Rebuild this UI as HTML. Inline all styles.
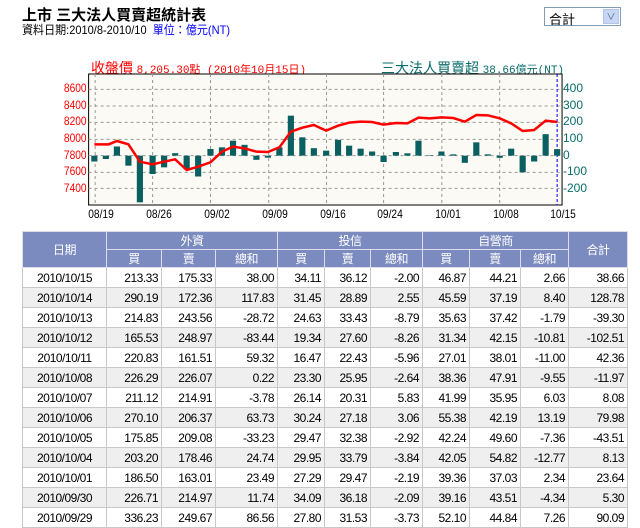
<!DOCTYPE html>
<html><head><meta charset="utf-8">
<style>
*{margin:0;padding:0;box-sizing:border-box}
body{width:640px;height:528px;overflow:hidden;background:#fff;font-family:"Liberation Sans","Noto Sans CJK TC",sans-serif;position:relative}
.abs{position:absolute;white-space:nowrap}
.yl{position:absolute;font-size:12px;color:#f00;left:60px;width:26px;text-align:right;transform:scaleX(.85);transform-origin:right}
.yr{position:absolute;font-size:12px;color:#0a6b6b;left:563px}
.xl{position:absolute;font-size:12px;color:#000;top:207px;transform:scaleX(.85)}
table{position:absolute;left:22px;top:231px;border-collapse:collapse;font-size:12px;table-layout:fixed}
td,th{border:1px solid #c8c8c8;height:20px;padding:0 3px;text-align:right;font-weight:normal;letter-spacing:-0.5px}
th{background:#7b8bbf;color:#fff;text-align:center;border-color:#dde;height:18px}
td:first-child{text-align:center}
tr.g td{background:#efefef}
</style></head><body>
<div class="abs" style="left:22px;top:4px;font-size:15px;font-weight:bold;color:#000">上市 三大法人買賣超統計表</div>
<div class="abs" style="left:22px;top:21px;font-size:12px;color:#000;transform:scaleX(.92);transform-origin:left">資料日期:2010/8-2010/10 &nbsp;<span style="color:#00f">單位：億元(NT)</span></div>
<div class="abs" style="left:544px;top:7px;width:77px;height:19px;border:1px solid #7f9db9;font-size:13px;padding:1px 4px">合計
<div style="position:absolute;right:1px;top:1px;width:16px;height:15px;background:#c6d6f3;border:1px solid #b0c4ec;color:#4d6185;font-size:9px;text-align:center;line-height:14px">&#8744;</div></div>

<div class="abs" style="left:91px;top:58px;font-size:13px;color:#f00"><span style="font-size:14px">收盤價</span> <span style="font-family:'Liberation Mono',monospace;font-size:11px">8,205.30點 (2010年10月15日)</span></div>
<div class="abs" style="left:381px;top:58px;font-size:13px;color:#0a6b6b"><span style="font-size:14px">三大法人買賣超</span> <span style="font-family:'Liberation Mono',monospace;font-size:11px">38.66億元(NT)</span></div>

<svg class="abs" style="left:0;top:0" width="640" height="230" viewBox="0 0 1560 690" preserveAspectRatio="none">
<rect x="216" y="222" width="1154" height="393" fill="#fcfaf4" stroke="#000" stroke-width="1" vector-effect="non-scaling-stroke"/>
<g stroke="#999" stroke-dasharray="3,3" stroke-width="1">
<path vector-effect="non-scaling-stroke" d="M216 268H1370M216 318H1370M216 367H1370M216 418H1370M216 467H1370M216 517H1370M216 565H1370M232 222V615M372 222V615M513 222V615M655 222V615M796 222V615M935 222V615M1077 222V615M1218 222V615"/>
</g>
<line x1="1358" y1="222" x2="1358" y2="615" stroke="#00f" stroke-dasharray="3,2" vector-effect="non-scaling-stroke"/>
<g fill="#0a6060" id="bars"></g>
<polyline fill="none" stroke="#f00" stroke-width="2.5" vector-effect="non-scaling-stroke" points="230,433 265,433 285,423 313,433 341,485 372,493 400,485 427,478 455,510 483,500 513,487 541,455 568,440 596,445 625,455 653,456 681,442 709,395 737,383 765,375 795,392 824,377 851,368 879,365 907,366 935,374 965,369 993,370 1020,353 1048,355 1076,352 1105,354 1133,365 1161,345 1189,346 1218,355 1246,370 1274,393 1302,390 1330,362 1358,366"/>
</svg>
<script>
var b=[[230,-35],[258,-20],[285,55],[313,-60],[341,-280],[372,-110],[400,-70],[427,15],[455,-80],[483,-125],[513,40],[541,50],[568,90],[596,65],[625,-25],[653,-12],[681,50],[709,240],[737,110],[765,45],[795,30],[824,95],[851,60],[879,42],[907,25],[935,-38],[965,22],[993,14],[1020,90],[1048,3],[1076,25],[1105,8],[1133,-43],[1161,80],[1189,8],[1218,-13],[1246,42],[1274,-100],[1302,-35],[1330,129],[1358,39]];
var g=document.getElementById('bars'),s='';
b.forEach(function(p){var h=p[1]*0.5;var y=h>0?467-h:467;s+='<rect x="'+(p[0]-7.5)+'" y="'+y+'" width="15" height="'+Math.abs(h)+'"/>';});
g.innerHTML=s;
</script>
<div class="yl" style="top:81px">8600</div><div class="yl" style="top:98px">8400</div><div class="yl" style="top:114px">8200</div><div class="yl" style="top:131px">8000</div><div class="yl" style="top:148px">7800</div><div class="yl" style="top:164px">7600</div><div class="yl" style="top:181px">7400</div>
<div class="yr" style="top:81px">400</div><div class="yr" style="top:98px">300</div><div class="yr" style="top:114px">200</div><div class="yr" style="top:131px">100</div><div class="yr" style="top:148px">0</div><div class="yr" style="top:164px">-100</div><div class="yr" style="top:181px">-200</div>
<div class="xl" style="left:86px">08/19</div><div class="xl" style="left:144px">08/26</div><div class="xl" style="left:202px">09/02</div><div class="xl" style="left:260px">09/09</div><div class="xl" style="left:318px">09/16</div><div class="xl" style="left:375px">09/24</div><div class="xl" style="left:433px">10/01</div><div class="xl" style="left:491px">10/08</div><div class="xl" style="left:548px">10/15</div>

<table>
<colgroup><col style="width:84px"><col style="width:55px"><col style="width:54px"><col style="width:62px"><col style="width:47px"><col style="width:46px"><col style="width:52px"><col style="width:47px"><col style="width:51px"><col style="width:48px"><col style="width:59px"></colgroup>
<tr><th rowspan="2">日期</th><th colspan="3">外資</th><th colspan="3">投信</th><th colspan="3">自營商</th><th rowspan="2">合計</th></tr>
<tr><th>買</th><th>賣</th><th>總和</th><th>買</th><th>賣</th><th>總和</th><th>買</th><th>賣</th><th>總和</th></tr>
<tr><td>2010/10/15</td><td>213.33</td><td>175.33</td><td>38.00</td><td>34.11</td><td>36.12</td><td>-2.00</td><td>46.87</td><td>44.21</td><td>2.66</td><td>38.66</td></tr>
<tr class="g"><td>2010/10/14</td><td>290.19</td><td>172.36</td><td>117.83</td><td>31.45</td><td>28.89</td><td>2.55</td><td>45.59</td><td>37.19</td><td>8.40</td><td>128.78</td></tr>
<tr><td>2010/10/13</td><td>214.83</td><td>243.56</td><td>-28.72</td><td>24.63</td><td>33.43</td><td>-8.79</td><td>35.63</td><td>37.42</td><td>-1.79</td><td>-39.30</td></tr>
<tr class="g"><td>2010/10/12</td><td>165.53</td><td>248.97</td><td>-83.44</td><td>19.34</td><td>27.60</td><td>-8.26</td><td>31.34</td><td>42.15</td><td>-10.81</td><td>-102.51</td></tr>
<tr><td>2010/10/11</td><td>220.83</td><td>161.51</td><td>59.32</td><td>16.47</td><td>22.43</td><td>-5.96</td><td>27.01</td><td>38.01</td><td>-11.00</td><td>42.36</td></tr>
<tr class="g"><td>2010/10/08</td><td>226.29</td><td>226.07</td><td>0.22</td><td>23.30</td><td>25.95</td><td>-2.64</td><td>38.36</td><td>47.91</td><td>-9.55</td><td>-11.97</td></tr>
<tr><td>2010/10/07</td><td>211.12</td><td>214.91</td><td>-3.78</td><td>26.14</td><td>20.31</td><td>5.83</td><td>41.99</td><td>35.95</td><td>6.03</td><td>8.08</td></tr>
<tr class="g"><td>2010/10/06</td><td>270.10</td><td>206.37</td><td>63.73</td><td>30.24</td><td>27.18</td><td>3.06</td><td>55.38</td><td>42.19</td><td>13.19</td><td>79.98</td></tr>
<tr><td>2010/10/05</td><td>175.85</td><td>209.08</td><td>-33.23</td><td>29.47</td><td>32.38</td><td>-2.92</td><td>42.24</td><td>49.60</td><td>-7.36</td><td>-43.51</td></tr>
<tr class="g"><td>2010/10/04</td><td>203.20</td><td>178.46</td><td>24.74</td><td>29.95</td><td>33.79</td><td>-3.84</td><td>42.05</td><td>54.82</td><td>-12.77</td><td>8.13</td></tr>
<tr><td>2010/10/01</td><td>186.50</td><td>163.01</td><td>23.49</td><td>27.29</td><td>29.47</td><td>-2.19</td><td>39.36</td><td>37.03</td><td>2.34</td><td>23.64</td></tr>
<tr class="g"><td>2010/09/30</td><td>226.71</td><td>214.97</td><td>11.74</td><td>34.09</td><td>36.18</td><td>-2.09</td><td>39.16</td><td>43.51</td><td>-4.34</td><td>5.30</td></tr>
<tr><td>2010/09/29</td><td>336.23</td><td>249.67</td><td>86.56</td><td>27.80</td><td>31.53</td><td>-3.73</td><td>52.10</td><td>44.84</td><td>7.26</td><td>90.09</td></tr>
</table>
</body></html>
